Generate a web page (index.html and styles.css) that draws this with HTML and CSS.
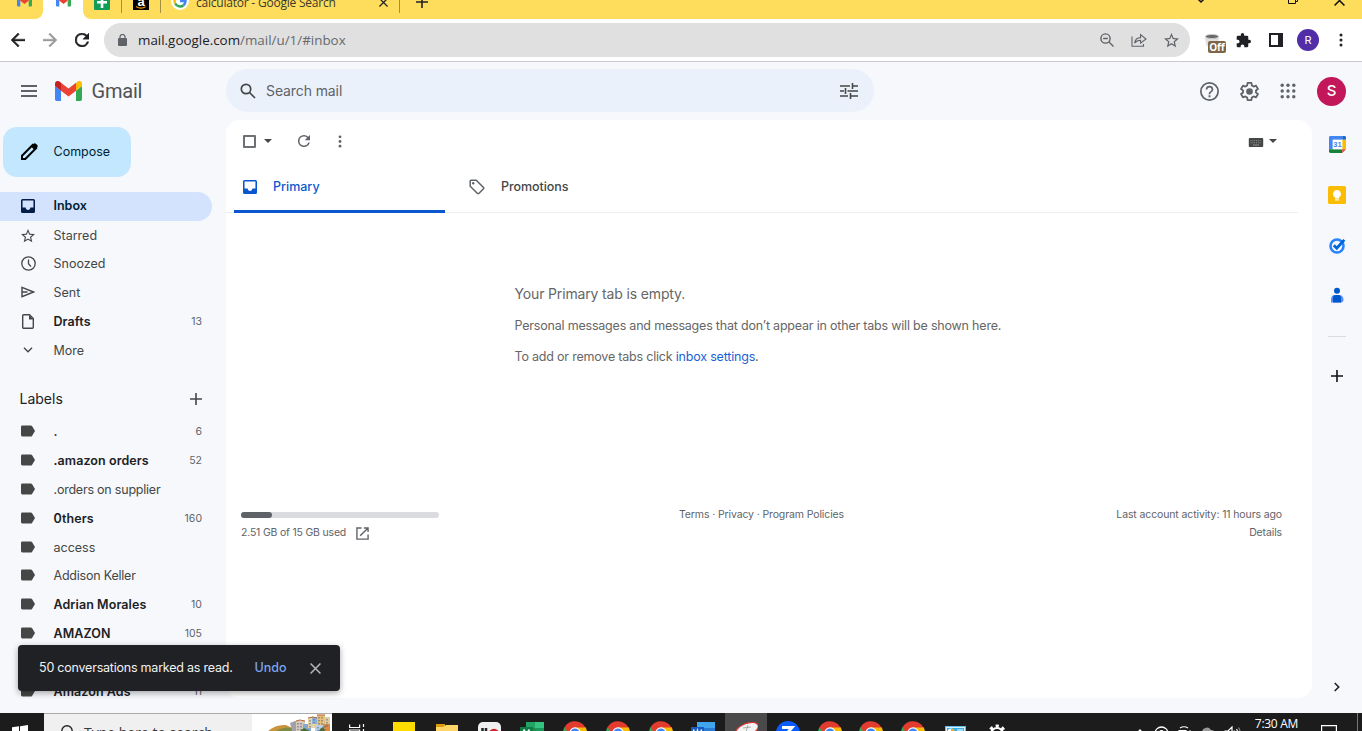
FILE: index.html
```
<!DOCTYPE html>
<html lang="en">
<head>
    <meta charset="UTF-8">
    <meta name="viewport" content="width=device-width, initial-scale=1.0">
    <title>Inbox - Gmail</title>
    <link rel="stylesheet" href="styles.css">
</head>
<body>

<!-- shared icons -->
<svg class="defs" width="0" height="0">
    <symbol id="gmail" viewBox="0 0 27 20">
        <path fill="#4285f4" d="M0 5v13.200a1.800 1.800 0 0 0 1.800 1.800H6V9.500z"/>
        <path fill="#34a853" d="M21 9.500V20h4.200a1.800 1.800 0 0 0 1.800-1.800V5z"/>
        <path fill="#fbbc04" d="M21 2v7.700l6-4.600V2.700C27 .3 24.300-.8 22.500.600z"/>
        <path fill="#ea4335" d="M6 9.700V1.800l7.500 5.700L21 1.800v7.900l-7.500 5.700z"/>
        <path fill="#c5221f" d="M0 2.700v2.400l6 4.600V1.800L4.500.600C2.700-.8 0 .3 0 2.700z"/>
    </symbol>
    <symbol id="label" viewBox="0 0 14 12">
        <path d="M1.500.500h8.300c.5 0 .9.200 1.200.600L14 6l-3 4.900c-.3.400-.7.600-1.200.600H1.500A1.400 1.400 0 0 1 0 10.100V1.900A1.400 1.400 0 0 1 1.500.500z"/>
    </symbol>
    <symbol id="inbox" viewBox="3 3 18 18">
        <path d="M19 3H5a2 2 0 0 0-2 2v14a2 2 0 0 0 2 2h14a2 2 0 0 0 2-2V5a2 2 0 0 0-2-2zm0 11h-4c0 1.660-1.350 3-3 3s-3-1.340-3-3H5V5h14v9z"/>
    </symbol>
    <symbol id="star" viewBox="2 2 20 20">
        <path d="M22 9.240l-7.190-.62L12 2 9.190 8.630 2 9.240l5.460 4.730L5.820 21 12 17.270 18.180 21l-1.630-7.030L22 9.240zM12 15.400l-3.760 2.270 1-4.280-3.320-2.880 4.380-.38L12 6.100l1.710 4.040 4.380.38-3.320 2.880 1 4.280L12 15.400z"/>
    </symbol>
    <symbol id="refresh" viewBox="4 4 16 16">
        <path d="M17.650 6.350A7.960 7.960 0 0 0 12 4a8 8 0 1 0 7.730 10h-2.080A6 6 0 1 1 12 6c1.660 0 3.140.69 4.220 1.780L13 11h7V4l-2.350 2.350z"/>
    </symbol>
    <symbol id="back" viewBox="4 4 16 16">
        <path d="M20 11H7.830l5.590-5.590L12 4l-8 8 8 8 1.410-1.410L7.830 13H20v-2z"/>
    </symbol>
    <symbol id="more" viewBox="0 0 4 14">
        <circle cx="2" cy="2" r="1.500"/><circle cx="2" cy="7" r="1.500"/><circle cx="2" cy="12" r="1.500"/>
    </symbol>
    <symbol id="close" viewBox="0 0 10 10">
        <path fill="none" stroke="currentColor" stroke-width="1.400" d="M.500.500l9 9M9.500.500l-9 9"/>
    </symbol>
    <symbol id="plus" viewBox="0 0 12 12">
        <path fill="none" stroke="currentColor" stroke-width="1.600" d="M6 0v12M0 6h12"/>
    </symbol>
    <symbol id="chrome" viewBox="0 0 24 24">
        <path fill="#34a853" d="M12 12L1.600 6A12 12 0 0 0 12 24z"/>
        <path fill="#fbbc04" d="M12 24A12 12 0 0 0 22.400 6H12v6z"/>
        <path fill="#e33b2e" d="M1.600 6a12 12 0 0 1 20.800 0.500H12L6.800 15z"/>
        <circle cx="12" cy="12" r="5.700" fill="#fff"/>
        <circle cx="12" cy="12" r="4.500" fill="#4285f4"/>
    </symbol>
</svg>

<div class="tabstrip">
    <div class="tab tab-pinned"><svg class="favicon"><use href="#gmail"/></svg></div>
    <div class="tab tab-active"><svg class="favicon"><use href="#gmail"/></svg></div>
    <div class="tab tab-small">
        <svg class="tab-icon wide" viewBox="0 0 16 16"><rect width="16" height="16" rx="1" fill="#0f9d58"/><path d="M3 7h10v2.500H9.300V14H6.700V9.500H3zM6.700 2h2.600v6H6.700z" fill="#fff"/></svg>
    </div>
    <div class="tab tab-small">
        <svg class="tab-icon" viewBox="0 0 16 16"><rect width="16" height="16"/><text x="8" y="11.500" class="amazon-a">a</text><path d="M3 12.500q5 3.200 9.500.300" fill="none" stroke="#f90" stroke-width="1.300"/></svg>
    </div>
    <div class="tab tab-wide">
        <svg class="tab-g" viewBox="0 0 18 18"><circle cx="9" cy="9" r="9" fill="#fff"/><g fill="none" stroke-width="2.500"><path stroke="#ea4335" d="M4.200 6.500A5.500 5.500 0 0 1 13 5"/><path stroke="#fbbc05" d="M4.200 6.500a5.500 5.500 0 0 0 0 5"/><path stroke="#34a853" d="M4.200 11.500A5.500 5.500 0 0 0 12.500 13.200"/><path stroke="#4285f4" d="M9 9h5.500a5.500 5.500 0 0 1-2 4.200"/></g></svg>
        <span class="tab-title">calculator - Google Search</span>
        <svg class="tab-close"><use href="#close"/></svg>
    </div>
    <svg class="new-tab"><use href="#plus"/></svg>
    <div class="window-buttons">
        <svg width="10" height="10" viewBox="0 0 10 10"><path d="M0 2l5 5 5-5" fill="none" stroke="#111" stroke-width="1.500"/></svg>
        <svg width="10" height="10" viewBox="0 0 10 10"><path d="M.500 2.500h7v7h-7zM2.500 2V.500h7v7H8" fill="none" stroke="#111"/></svg>
        <svg width="11" height="11"><use href="#close"/></svg>
    </div>
</div>

<div class="toolbar">
    <div class="nav-buttons">
        <svg width="14" height="14"><use href="#back"/></svg>
        <svg width="14" height="14" class="forward"><use href="#back"/></svg>
        <svg width="14" height="14" class="reload"><use href="#refresh"/></svg>
    </div>
    <div class="omnibox">
        <svg class="lock" viewBox="0 0 9 12"><path d="M0 5a1 1 0 0 1 1-1h7a1 1 0 0 1 1 1v6a1 1 0 0 1-1 1H1a1 1 0 0 1-1-1z"/><path d="M2 5V3a2.500 2.500 0 0 1 5 0v2" fill="none" stroke="#5f6368" stroke-width="1.200"/></svg>
        <span class="url">mail.google.com<span>/mail/u/1/#inbox</span></span>
        <div class="omnibox-icons">
            <svg width="14" height="14" viewBox="0 0 14 14" fill="none" stroke="#5f6368" stroke-width="1.400"><circle cx="5.500" cy="5.500" r="4.600"/><path d="M9 9l4.500 4.500M3.200 5.500h4.600"/></svg>
            <svg width="16" height="14" viewBox="0 0 16 14" fill="none" stroke="#5f6368" stroke-width="1.100"><path d="M1 3.500v9.800h11.500V11M3.600 10.200c.5-3.500 2.500-5.500 6-5.600V1.600L15 6l-5.400 4.200V7.300c-2.600 0-4.500.9-6 2.900z"/></svg>
            <svg width="15" height="15" fill="#5f6368"><use href="#star"/></svg>
        </div>
    </div>
    <div class="extensions">
        <div class="cup">
            <svg width="16" height="12" viewBox="0 0 16 12"><path d="M1 3h14v2l-1.500 7h-11L1 5z" fill="#e0e0e0"/><ellipse cx="8" cy="2.500" rx="6.500" ry="2" fill="#666" stroke="#c8c8c8"/></svg>
            <span class="cup-badge">Off</span>
        </div>
        <svg width="15" height="15" viewBox="1 1 22 22" fill="#202124"><path d="M20.500 11H19V7a2 2 0 0 0-2-2h-4V3.500a2.500 2.500 0 0 0-5 0V5H4a2 2 0 0 0-2 2v3.800h1.500a2.700 2.700 0 0 1 0 5.400H2V20a2 2 0 0 0 2 2h3.800v-1.500a2.700 2.700 0 0 1 5.400 0V22H17a2 2 0 0 0 2-2v-4h1.500a2.500 2.500 0 0 0 0-5z"/></svg>
        <svg width="14" height="14" viewBox="0 0 14 14"><path d="M1 1h12v12H1z" fill="#fff" stroke="#202124" stroke-width="2"/><path d="M9 1h4v12H9z" fill="#202124"/></svg>
        <span class="profile">R</span>
        <svg width="4" height="14" fill="#202124"><use href="#more"/></svg>
    </div>
</div>

<header class="header">
    <svg class="menu" viewBox="0 0 16 12"><path d="M0 1h16M0 6h16M0 11h16" stroke="#5f6368" stroke-width="1.800"/></svg>
    <svg class="logo"><use href="#gmail"/></svg>
    <span class="brand">Gmail</span>
    <div class="search">
        <svg width="16" height="16" viewBox="0 0 16 16" fill="none" stroke="#444746" stroke-width="1.700"><circle cx="6" cy="6" r="4.700"/><path d="M9.500 9.500l5.500 5.500"/></svg>
        <span>Search mail</span>
        <svg class="tune" width="18" height="16" viewBox="0 0 18 16" fill="none" stroke="#444746" stroke-width="1.600"><path d="M0 3h10M13 3h5M12.500 0v6M0 8h4M7.500 8H18M5.500 5v6M0 13h8M11 13h7M10.500 10v6"/></svg>
    </div>
    <div class="header-icons">
        <svg width="19" height="19" viewBox="2 2 20 20" fill="#5f6368"><path d="M11 18h2v-2h-2v2zm1-16a10 10 0 1 0 0 20 10 10 0 0 0 0-20zm0 18.200a8.200 8.200 0 1 1 0-16.400 8.200 8.200 0 0 1 0 16.400zM12 6a4 4 0 0 0-4 4h1.800c0-1.200 1-2.200 2.200-2.200s2.200 1 2.200 2.200c0 2-3.100 1.800-3.100 5h1.800c0-2.200 3.100-2.500 3.100-5a4 4 0 0 0-4-4z"/></svg>
        <svg width="19" height="19" viewBox="2 2 20 20"><path fill="none" stroke="#5f6368" stroke-width="1.900" stroke-linejoin="round" d="M10 3h4l.5 2.700 1.800 1.100 2.600-1 2 3.500L18.800 11v2l2.100 1.700-2 3.500-2.600-1-1.800 1.100L14 21h-4l-.5-2.700-1.800-1.100-2.600 1-2-3.500L5.200 13v-2L3.100 9.300l2-3.500 2.600 1 1.800-1.100z"/><circle cx="12" cy="12" r="3.500" fill="#5f6368"/></svg>
        <svg width="16" height="16" viewBox="0 0 16 16" fill="#5f6368"><circle cx="2.200" cy="2.200" r="1.700"/><circle cx="8" cy="2.200" r="1.700"/><circle cx="13.800" cy="2.200" r="1.700"/><circle cx="2.200" cy="8" r="1.700"/><circle cx="8" cy="8" r="1.700"/><circle cx="13.800" cy="8" r="1.700"/><circle cx="2.200" cy="13.800" r="1.700"/><circle cx="8" cy="13.800" r="1.700"/><circle cx="13.800" cy="13.800" r="1.700"/></svg>
        <span class="account">S</span>
    </div>
</header>

<div class="content">
    <nav class="sidebar">
        <div class="compose">
            <svg width="18" height="18" viewBox="0 0 18 18"><path d="M2 12.700L12.700 2l3.300 3.300L5.300 16H2z" fill="none" stroke="#000" stroke-width="2"/><path d="M11 3.500l2.500-2.700c.7-.7 1.700-.7 2.400 0l1.300 1.300c.7.700.7 1.700 0 2.400L14.500 7z"/></svg>
            <span>Compose</span>
        </div>

        <a class="row active"><svg width="14" height="14"><use href="#inbox"/></svg><span>Inbox</span></a>
        <a class="row"><svg width="14" height="14" class="nudge"><use href="#star"/></svg><span>Starred</span></a>
        <a class="row"><svg width="15" height="15" viewBox="0 0 15 15" fill="none" stroke="#444746" stroke-width="1.300"><circle cx="7.500" cy="7.500" r="6.700"/><path d="M7.500 3.500v4.200l2.500 3"/></svg><span>Snoozed</span></a>
        <a class="row"><svg width="14" height="12" viewBox="0 0 14 12" fill="none" stroke="#444746" stroke-width="1.400"><path d="M1 1.300L12.500 6 1 10.700zM1 6h5.500"/></svg><span>Sent</span></a>
        <a class="row bold"><svg width="12" height="15" viewBox="0 0 12 15"><path d="M.7 1.700a1 1 0 0 1 1-1h5.800l3.800 3.800v8.800a1 1 0 0 1-1 1H1.700a1 1 0 0 1-1-1z" fill="none" stroke="#444746" stroke-width="1.400"/><path d="M7 1v4.500h4.500z"/></svg><span>Drafts</span><em>13</em></a>
        <a class="row"><svg width="10" height="6" viewBox="0 0 10 6"><path d="M1 .800l4 4 4-4" fill="none" stroke="#444746" stroke-width="1.400"/></svg><span>More</span></a>

        <div class="labels-title">Labels <svg width="12" height="12"><use href="#plus"/></svg></div>

        <a class="row"><svg width="14" height="12"><use href="#label"/></svg><span class="dot">.</span><em>6</em></a>
        <a class="row bold"><svg width="14" height="12"><use href="#label"/></svg><span>.amazon orders</span><em>52</em></a>
        <a class="row"><svg width="14" height="12"><use href="#label"/></svg><span class="tight">.orders on supplier</span></a>
        <a class="row bold"><svg width="14" height="12"><use href="#label"/></svg><span>0thers</span><em>160</em></a>
        <a class="row"><svg width="14" height="12"><use href="#label"/></svg><span>access</span></a>
        <a class="row"><svg width="14" height="12"><use href="#label"/></svg><span class="tight">Addison Keller</span></a>
        <a class="row bold"><svg width="14" height="12"><use href="#label"/></svg><span>Adrian Morales</span><em>10</em></a>
        <a class="row bold"><svg width="14" height="12"><use href="#label"/></svg><span>AMAZON</span><em>105</em></a>
        <a class="row"><svg width="14" height="12"><use href="#label"/></svg></a>
        <a class="row bold"><svg width="14" height="12"><use href="#label"/></svg><span>Amazon Ads</span><em>11</em></a>
    </nav>

    <main class="mail">
        <div class="actions">
            <span class="checkbox"></span>
            <span class="caret"></span>
            <svg class="act-refresh"><use href="#refresh"/></svg>
            <svg class="act-more"><use href="#more"/></svg>
            <svg class="keyboard" viewBox="0 0 16 10"><rect width="16" height="10" rx="1" fill="#444746"/><path d="M2 3h12M2 5.300h12" stroke="#a0a1a1" stroke-dasharray="1 1"/><path d="M4.500 7.800h7" stroke="#a0a1a1"/></svg>
            <span class="caret"></span>
        </div>
        <div class="tabs">
            <div class="mail-tab selected"><svg width="14" height="14"><use href="#inbox"/></svg>Primary</div>
            <div class="mail-tab"><svg width="16" height="16" viewBox="0 0 16 16"><path d="M1.200 2.200a1 1 0 0 1 1-1h5l7.300 7.300a1 1 0 0 1 0 1.300l-4.700 4.700a1 1 0 0 1-1.300 0L1.200 7.200z" fill="none" stroke="#5f6368" stroke-width="1.500"/><circle cx="4.200" cy="4.200" r="1.200" fill="#5f6368"/></svg>Promotions</div>
        </div>
        <div class="empty">
            <h2>Your Primary tab is empty.</h2>
            <p>Personal messages and messages that don’t appear in other tabs will be shown here.</p>
            <p>To add or remove tabs click <a>inbox settings</a>.</p>
        </div>
        <footer class="footer">
            <div class="storage">
                <div class="meter"><div class="meter-used"></div></div>
                <span class="quota">2.51 GB of 15 GB used</span>
                <svg width="13" height="13" viewBox="0 0 14 14" fill="none" stroke="#5f6368" stroke-width="1.500"><path d="M6 1H1v12h12V8M8.500 1H13v4.500M13 1L4.500 9.500"/></svg>
            </div>
            <div class="terms">Terms · Privacy · Program Policies</div>
            <div class="activity">Last account activity: 11 hours ago<br>Details</div>
        </footer>
    </main>

    <aside class="side-panel">
        <svg width="17" height="17" viewBox="0 0 18 18"><path d="M1.500 0H14v4H4v10H0V1.500A1.500 1.500 0 0 1 1.500 0z" fill="#4285f4"/><path d="M14 0h2.500A1.500 1.500 0 0 1 18 1.500V4h-4z" fill="#1967d2"/><path d="M14 4h4v10h-4z" fill="#fbbc04"/><path d="M0 14h14v4H1.500A1.500 1.500 0 0 1 0 16.500z" fill="#188038"/><path d="M14 14h4l-4 4z" fill="#ea4335"/><path d="M4 4h10v10H4z" fill="#fff"/><text x="9" y="12" class="cal-day">31</text></svg>
        <svg width="18" height="18" viewBox="0 0 18 18"><rect width="18" height="18" rx="1.500" fill="#fbbc04"/><path d="M9 4a4 4 0 0 1 2 7.400v1.100H7v-1.100A4 4 0 0 1 9 4zM7 13.200h4V14.500H7z" fill="#fff"/></svg>
        <svg width="17" height="17" viewBox="0 0 17 17" fill="none"><circle cx="8" cy="9" r="6.500" stroke="#2684fc" stroke-width="2.600"/><path d="M4.800 8.200l3 3 7.500-8.300" stroke="#0066da" stroke-width="2.800"/></svg>
        <svg width="14" height="16" viewBox="0 0 14 16"><circle cx="7" cy="3.700" r="3" fill="#0057cc"/><path d="M1 15.500v-3C1 10 2.500 8 4.500 8h5c2 0 4 2 4 4.500 0 1.800-1 3-2.500 3z" fill="#5b8df8"/><path d="M3 15.500V11a3 3 0 0 1 3-3h2a3 3 0 0 1 3 3v4.500z" fill="#0057cc"/></svg>
        <hr>
        <svg width="12" height="12" class="add"><use href="#plus"/></svg>
        <svg class="collapse" width="6" height="10" viewBox="0 0 6 10"><path d="M.700 1l4 4-4 4" fill="none" stroke="#202124" stroke-width="1.600"/></svg>
    </aside>
</div>

<div class="toast">
    <span>50 conversations marked as read.</span>
    <a>Undo</a>
    <svg width="11" height="11"><use href="#close"/></svg>
</div>

<div class="taskbar">
    <div class="start"><svg width="16" height="16" viewBox="0 0 16 16" fill="#fff"><path d="M0 2.300L7 1.300v6.500H0zM8 1.200L16 0v7.800H8zM0 8.800h7v6L0 14zM8 8.800h8V16l-8-1z"/></svg></div>
    <div class="task-search">
        <svg width="16" height="16" viewBox="0 0 16 16" fill="none" stroke="#222" stroke-width="1.400"><circle cx="8" cy="6" r="5.200"/><path d="M4 10l-4 5"/></svg>
        <span>Type here to search</span>
    </div>
    <!-- search highlight artwork: village on a hillside -->
    <svg class="village" width="80" height="18" viewBox="0 0 80 18">
        <rect width="80" height="18" fill="#fff"/>
        <rect width="80" height="1" fill="#aaa"/>
        <path d="M16 18q8-7 18-6l12 6z" fill="#c9953c"/>
        <path d="M24 18q8-5 18-3l4 3z" fill="#7f8a45"/>
        <path d="M38 10l5-2 8 1v9H40z" fill="#a4a0a8"/>
        <path d="M44 8h9v10h-9z" fill="#d8c9b8"/><path d="M51 11h8v7h-8z" fill="#86a9cf"/>
        <path d="M56 5h9v10h-9z" fill="#e6d3a8"/><path d="M60 4h7v7h-7z" fill="#8db2d8"/>
        <path d="M65 2h8v11h-8z" fill="#e8c07a"/><path d="M73 4h5v12h-5z" fill="#dfcda9"/>
        <path d="M63 12h8v6h-8z" fill="#b8cfe6"/><path d="M71 11h7v7h-7z" fill="#d88a45"/>
        <path d="M46 10v7M49 10v7M58 7v8M62 6v4M67 4v8M70 4v8M75 6v9M66 14v4M73 13v4" stroke="#44658c" stroke-dasharray="1.500 1.500"/>
        <path d="M44 8l4-1 5 1M56 5l5-1 4 1M65 2h8" stroke="#b5622c" fill="none"/>
        <path d="M48 18l4-3 6 3zM68 16l3-2 2 4h-6z" fill="#496b35"/>
    </svg>
    <div class="apps">
        <div><svg width="16" height="16" viewBox="0 0 16 16" fill="none" stroke="#fff" stroke-width="1.200"><path d="M.600.500v3h10v-3M.600 16V6h10v10M14.500 0v3M14.500 5v11"/></svg></div>
        <div><svg width="22" height="22" class="up"><rect width="22" height="22" fill="#ffdc00"/></svg></div>
        <div><svg width="22" height="20" viewBox="0 0 22 20"><path d="M0 0h9v5H0z" fill="#dc9b0a"/><path d="M0 3h7l3-2h12v19H0z" fill="#ffd567"/></svg></div>
        <div><svg width="23" height="23" class="up" viewBox="0 0 23 23"><rect width="23" height="23" rx="5" fill="#f0f0f0"/><path d="M4.500 6v6M8 6v6" stroke="#222" stroke-width="2.500"/><circle cx="16" cy="12" r="4" fill="none" stroke="#d0202a" stroke-width="2.500"/></svg></div>
        <div><svg width="24" height="22" class="up" viewBox="0 0 24 22"><path d="M6 0h9v22H6z" fill="#21a366"/><path d="M15 0h9v22h-9z" fill="#33c481"/><path d="M6 6h18v16H6z" fill="#107c41" opacity=".6"/><rect y="5" width="13" height="13" fill="#107c41"/><path d="M3.500 7.500l6 8M9.500 7.500l-6 8" stroke="#fff" stroke-width="1.800"/></svg></div>
        <div><svg class="chrome"><use href="#chrome"/></svg></div>
        <div><svg class="chrome"><use href="#chrome"/></svg></div>
        <div><svg class="chrome"><use href="#chrome"/></svg></div>
        <div><svg width="24" height="22" class="up" viewBox="0 0 24 22"><path d="M6 0h18v22H6z" fill="#41a5ee"/><path d="M6 6h18v16H6z" fill="#2b7cd3"/><rect y="5" width="13" height="13" fill="#185abd"/><path d="M2.500 7.500l2 8 2-7 2 7 2-8" stroke="#fff" stroke-width="1.500" fill="none"/></svg></div>
        <div class="open"><svg width="24" height="20" class="up" viewBox="0 0 24 20"><ellipse cx="13" cy="8" rx="12" ry="6" fill="#f4f4f4" stroke="#d33" stroke-width="1.200" transform="rotate(-22 12 8)"/><path d="M9 6l8-1M14 3l-2 7" stroke="#999" stroke-width=".8"/></svg></div>
        <div><svg class="chrome" viewBox="0 0 24 24"><circle cx="12" cy="12" r="12" fill="#0b5cff"/><path d="M6 6.500h10l-6 7" fill="none" stroke="#fff" stroke-width="3"/></svg></div>
        <div><svg class="chrome"><use href="#chrome"/></svg></div>
        <div><svg class="chrome"><use href="#chrome"/></svg></div>
        <div><svg class="chrome"><use href="#chrome"/></svg></div>
        <div><svg class="low" width="21" height="18" viewBox="0 0 21 18"><rect width="21" height="18" fill="#5cc0ee"/><rect x="1" y="1" width="19" height="16" fill="#d9f1fc"/><rect x="2" y="2" width="17" height="14" fill="#39aee6"/><circle cx="6" cy="6" r="3.500" fill="#fff"/><path d="M6 6V2.500A3.500 3.500 0 0 1 9.500 6z" fill="#f5a623"/><path d="M12 4h6M12 6.500h4" stroke="#fff"/></svg></div>
        <div><svg width="20" height="20" viewBox="0 0 20 20" fill="none" stroke="#fff"><circle cx="10" cy="10" r="6" stroke-width="2.200"/><circle cx="10" cy="10" r="8" stroke-width="3" stroke-dasharray="3.140 3.140" stroke-dashoffset="1.570"/></svg></div>
    </div>
    <div class="tray">
        <svg width="10" height="6" viewBox="0 0 10 6"><path d="M0 6l5-5 5 5" fill="none" stroke="#fff" stroke-width="1.300"/></svg>
        <svg width="15" height="15" viewBox="0 0 15 15"><circle cx="7.500" cy="7.500" r="6.500" fill="none" stroke="#fff" stroke-width="1.300"/><circle cx="7.500" cy="6.500" r="2.500" fill="#fff"/></svg>
        <svg width="13" height="16" viewBox="0 0 13 16" fill="none" stroke="#fff" stroke-width="1.200"><path d="M2 2q4-2.500 8 0M1 4.500h7v9H1zM8 7l4-2v8"/></svg>
        <svg width="15" height="12" viewBox="0 0 15 12" fill="#999"><path d="M3 11a3 3 0 0 1-1-6 5 5 0 0 1 9-1c3 0 4 2 4 4s-1 3-3 3z"/></svg>
        <svg width="17" height="14" viewBox="0 0 17 14" fill="none" stroke="#fff" stroke-width="1.200"><path d="M1 5h3l4-4v12l-4-4H1zM10 4.500q1.500 2.500 0 5M12.500 3q2.500 4 0 8"/><path stroke="#888" d="M14.500 1.500q3.500 5.500 0 11"/></svg>
        <time>7:30 AM</time>
        <svg class="notice" width="16" height="14" viewBox="0 0 16 14"><path d="M.600.600h14.800v11H9l-3 2.500v-2.500H.600z" fill="none" stroke="#fff" stroke-width="1.200"/></svg>
    </div>
    <div class="show-desktop"></div>
</div>

</body>
</html>
```
FILE: styles.css
```
* {
    box-sizing: border-box;
}
body {
    margin: 0;
    width: 1362px;
    height: 731px;
    overflow: hidden;
    display: flex;
    flex-direction: column;
    background: #f6f8fc;
    color: #444746;
    font-family: Inter, Roboto, sans-serif;
    font-size: 12.5px;
}
svg {
    display: block;
    flex: none;
}
.defs {
    position: absolute;
}

/* browser tabs */
.tabstrip {
    height: 19px;
    flex: none;
    display: flex;
    background: #ffdd5c;
    overflow: hidden;
}
.tab {
    display: flex;
    align-items: flex-end;
    justify-content: center;
    height: 19px;
}
.favicon {
    width: 15px;
    height: 12px;
    margin-bottom: 12px;
}
.tab-pinned {
    width: 43px;
    padding-left: 5px;
    border-radius: 0 0 8px 0;
}
.tab-active {
    width: 40px;
    background: #fff;
    box-shadow: -8px 8px 0 #fff, 8px 8px 0 #fff;
}
.tab-pinned, .tab-small {
    background: #ffdd5c;
    z-index: 1;
}
.tab-small {
    width: 39px;
    border-radius: 0 0 0 8px;
    position: relative;
}
.tab-small::after, .tab-wide::after {
    content: "";
    position: absolute;
    right: 0;
    bottom: 6px;
    width: 1px;
    height: 20px;
    background: #a48f45;
}
.tab-icon {
    width: 16px;
    height: 16px;
    margin: 0 1px 9px 0;
}
.tab-icon.wide {
    margin-right: 2px;
}
.amazon-a {
    font: bold 13px "Liberation Sans", sans-serif;
    text-anchor: middle;
    fill: #fff;
}
.tab-wide {
    width: 239px;
    position: relative;
    justify-content: flex-start;
    padding-left: 10px;
}
.tab-g {
    width: 18px;
    height: 18px;
    margin-bottom: 9px;
}
.tab-title {
    margin: 0 0 7px 7px;
    width: 183px;
    font: 12px/18px "Open Sans", sans-serif;
    letter-spacing: -0.22px;
    color: #3c3a2c;
}
.tab-close {
    width: 9px;
    height: 9px;
    margin-bottom: 12px;
    color: #222;
    stroke-width: 1.6;
}
.new-tab {
    width: 12px;
    height: 12px;
    margin: -4px 0 0 16px;
    color: #222;
}
.window-buttons {
    margin: -5px 17px 0 auto;
    display: flex;
    color: #111;
}
.window-buttons svg:nth-child(2) {
    margin: -1px 36px 0 82px;
}

/* address bar */
.toolbar {
    height: 43px;
    flex: none;
    display: flex;
    align-items: center;
    background: #fff;
    border-bottom: 1px solid #c9cacd;
}
.nav-buttons {
    width: 104px;
    display: flex;
    gap: 18px;
    padding-left: 11px;
    fill: #202124;
    stroke: #202124;
    stroke-width: .5;
}
.nav-buttons .forward {
    transform: scaleX(-1);
    fill: #9a9b9d;
    stroke: #9a9b9d;
}
.omnibox {
    width: 1086px;
    height: 34px;
    border-radius: 17px;
    background: #e0e0e0;
    display: flex;
    align-items: center;
    padding: 0 11px 0 14px;
}
.lock {
    width: 9px;
    height: 12px;
    margin-top: -1px;
    fill: #5f6368;
}
.url {
    margin-left: 11px;
    font: 13.4px/20px "Open Sans", sans-serif;
    color: #202124;
}
.url span {
    color: #666a6e;
}
.omnibox-icons {
    margin-left: auto;
    display: flex;
    align-items: center;
    gap: 17px;
}
.extensions {
    flex: 1;
    display: flex;
    align-items: center;
    padding-left: 14px;
}
.cup {
    width: 32px;
    height: 22px;
    position: relative;
    padding-top: 5px;
}
.cup-badge {
    position: absolute;
    left: 4px;
    top: 12px;
    width: 18px;
    height: 12px;
    border-radius: 2px;
    background: #7d6545;
    color: #fff;
    font: bold 10px/12px "Open Sans", sans-serif;
    text-align: center;
}
.extensions > svg:nth-child(3) {
    margin: 0 14px 0 18px;
}
.profile {
    width: 22px;
    height: 22px;
    border-radius: 50%;
    background: #512da8;
    color: #fff;
    font-size: 11px;
    line-height: 22px;
    text-align: center;
    margin-right: 20px;
}

/* gmail header */
.header {
    height: 58px;
    flex: none;
    display: flex;
    align-items: center;
}
.menu {
    width: 16px;
    height: 12px;
    margin-left: 20.500px;
}
.logo {
    width: 27px;
    height: 20px;
    margin-left: 18px;
}
.brand {
    width: 134.500px;
    margin-left: 10px;
    font: 20px/24px Roboto, sans-serif;
    letter-spacing: -.2px;
    color: #505356;
}
.search {
    width: 648px;
    height: 43px;
    border-radius: 22px;
    background: #eaf1fb;
    display: flex;
    align-items: center;
    gap: 10px;
    padding: 0 16px 0 14px;
    margin-bottom: 1px;
    font-size: 14px;
    letter-spacing: -.1px;
    color: #5f6368;
}
.tune {
    margin-left: auto;
}
.header-icons {
    flex: 1;
    display: flex;
    align-items: center;
    justify-content: flex-end;
    gap: 21px;
    padding-right: 16px;
}
.account {
    width: 29px;
    height: 29px;
    border-radius: 50%;
    background: #c2185b;
    color: #fff;
    font-size: 15px;
    font-weight: 500;
    line-height: 28px;
    text-align: center;
}

/* sidebar */
.content {
    flex: 1;
    min-height: 0;
    display: flex;
}
.sidebar {
    width: 226px;
    height: 577px;
    overflow: hidden;
    padding-top: 7px;
}
.compose {
    width: 128px;
    height: 50px;
    margin: 0 0 15px 3px;
    padding-left: 17px;
    border-radius: 14px;
    background: #c2e7ff;
    color: #001d35;
    display: flex;
    align-items: center;
    gap: 15.500px;
}
.compose span {
    margin-top: -2px;
}
.row {
    width: 212px;
    height: 28.8px;
    display: grid;
    grid-template-columns: 16px 1fr auto;
    column-gap: 18px;
    align-items: center;
    padding: 0 10px 0 20px;
    fill: #444746;
}
.row svg {
    justify-self: center;
    margin-top: -1px;
}
.row .nudge {
    margin-top: 2px;
}
.row span {
    margin-left: -.5px;
}
.row .tight {
    letter-spacing: -.22px;
}
.row em {
    font-style: normal;
    font-weight: 400;
    font-size: 10.5px;
    letter-spacing: 0;
    color: #5f6368;
}
.row.bold {
    font-weight: 600;
    color: #202124;
    letter-spacing: .08px;
}
.row.active {
    border-radius: 0 15px 15px 0;
    background: #d3e3fd;
    color: #001d35;
    fill: #041e49;
    font-weight: 600;
}
.row.active span {
    margin-top: -1px;
}
.row .dot {
    font-weight: 600;
}
.labels-title {
    width: 202px;
    height: 52.8px;
    padding: 15px 0 0 19.500px;
    display: flex;
    align-items: center;
    justify-content: space-between;
    font-size: 14px;
    color: #202124;
}
.labels-title svg {
    color: #444746;
}

/* message list */
.mail {
    width: 1086px;
    height: 578px;
    border-radius: 14px;
    background: #fff;
    position: relative;
}
.actions {
    height: 42px;
    display: flex;
    align-items: center;
    padding: 0 35px 0 18px;
    fill: #5f6368;
}
.checkbox {
    width: 13px;
    height: 13px;
    margin-left: -1px;
    border: 2px solid #6d7175;
    border-radius: 1px;
}
.caret {
    margin-left: 8px;
    border: 4px solid transparent;
    border-top-color: #444746;
    border-bottom: 0;
}
.act-refresh {
    width: 12px;
    height: 12px;
    margin-left: 26px;
}
.act-more {
    width: 4px;
    height: 13px;
    margin-left: 28px;
}
.keyboard {
    width: 16px;
    height: 9px;
    margin: 3px -3px 0 auto;
}
.tabs {
    height: 51px;
    width: 1072px;
    display: flex;
    padding-left: 8px;
    gap: 15px;
    border-bottom: 1px solid #eceff1;
}
.mail-tab {
    width: 211px;
    height: 51px;
    padding: 0 0 3px 9px;
    display: flex;
    align-items: center;
    gap: 16px;
    font-weight: 500;
    letter-spacing: -.06px;
    color: #444746;
}
.mail-tab svg {
    margin-top: 2px;
}
.mail-tab.selected {
    color: #0b57d0;
    fill: #0b57d0;
    border-bottom: 3px solid #0b57d0;
    border-radius: 2px 2px 0 0;
    padding-bottom: 0;
    letter-spacing: 0;
}
.empty {
    margin: 72px 0 0 288.500px;
    color: #666;
}
.empty h2 {
    margin: 0 0 14px;
    font-size: 14px;
    line-height: 18px;
    font-weight: 400;
    letter-spacing: -.15px;
}
.empty p {
    margin: 0 0 13px;
    line-height: 18px;
    letter-spacing: -.2px;
}
.empty a {
    color: #1a62d6;
}
.footer {
    margin-top: 140px;
    padding: 0 30px 0 15px;
    display: grid;
    grid-template-columns: 198px 1fr 198px;
    font-size: 10.5px;
    line-height: 18px;
    letter-spacing: -.12px;
    color: #5f6368;
}
.storage {
    display: flex;
    flex-wrap: wrap;
    align-items: center;
    column-gap: 10px;
}
.meter {
    width: 198px;
    height: 6px;
    margin: 6px 0 6px;
    border-radius: 3px;
    background: #dadce0;
}
.meter-used {
    width: 31px;
    height: 6px;
    border-radius: 3px;
    background: #5f6368;
}
.quota {
    letter-spacing: -.2px;
}
.terms {
    text-align: center;
}
.activity {
    text-align: right;
    white-space: nowrap;
}

/* right side panel */
.side-panel {
    flex: 1;
    display: flex;
    flex-direction: column;
    align-items: center;
    padding: 16px 0 21px;
    gap: 33px;
}
.side-panel hr {
    width: 18px;
    height: 1px;
    margin: 0;
    border: 0;
    background: #dadce0;
}
.cal-day {
    font: bold 8px "Liberation Sans", sans-serif;
    text-anchor: middle;
    fill: #4285f4;
}
.add {
    color: #111;
}
.collapse {
    margin-top: auto;
}

/* snackbar over the page */
.toast {
    position: absolute;
    left: 18px;
    top: 645px;
    width: 322px;
    height: 46px;
    padding: 0 19px 0 21px;
    display: flex;
    align-items: center;
    border-radius: 4px;
    background: #202124;
    color: #f2f2f2;
    letter-spacing: -.22px;
    box-shadow: 0 2px 6px rgba(0, 0, 0, .35);
}
.toast span, .toast a {
    margin-top: -1px;
}
.toast a {
    margin-left: 22px;
    margin-right: auto;
    color: #7ba5f0;
    font-weight: 500;
    letter-spacing: 0;
}
.toast svg {
    color: #b4b5b7;
}

/* windows taskbar */
.taskbar {
    height: 18px;
    flex: none;
    display: flex;
    background: #1c1c1c;
    overflow: hidden;
}
.start {
    width: 44px;
    padding: 12px 0 0 12px;
}
.task-search {
    width: 208px;
    display: flex;
    background: #f0f0f0;
    border-top: 1px solid #aaa;
    padding: 11px 0 0 15px;
    gap: 9px;
}
.task-search span {
    margin-top: -1px;
    font: 14px/18px "Open Sans", sans-serif;
    color: #3a3a3a;
    white-space: nowrap;
}
.apps {
    display: grid;
    grid-template-columns: 50.500px repeat(8, 42.800px) repeat(7, 41.900px);
}
.apps div {
    padding-top: 11px;
    height: 40px;
}
.apps svg {
    margin: 0 auto;
}
.apps .up {
    margin-top: -2px;
}
.apps .low {
    margin-top: 2px;
}
.apps .chrome {
    width: 24px;
    height: 24px;
    margin-top: -3px;
}
.apps .open {
    background: #4a4a4a;
}
.tray {
    flex: 1;
    display: flex;
    align-items: flex-start;
    justify-content: flex-end;
    gap: 9px;
    padding: 13px 20px 0 0;
}
.tray svg:first-child {
    margin-top: 3px;
}
.tray time {
    margin: -11px 14px 0 5px;
    font: 12px/18px "Open Sans", sans-serif;
    letter-spacing: -.3px;
    color: #fff;
}
.tray .notice {
    margin-top: -1px;
}
.show-desktop {
    width: 5px;
    border-left: 1px solid #777;
}
```
